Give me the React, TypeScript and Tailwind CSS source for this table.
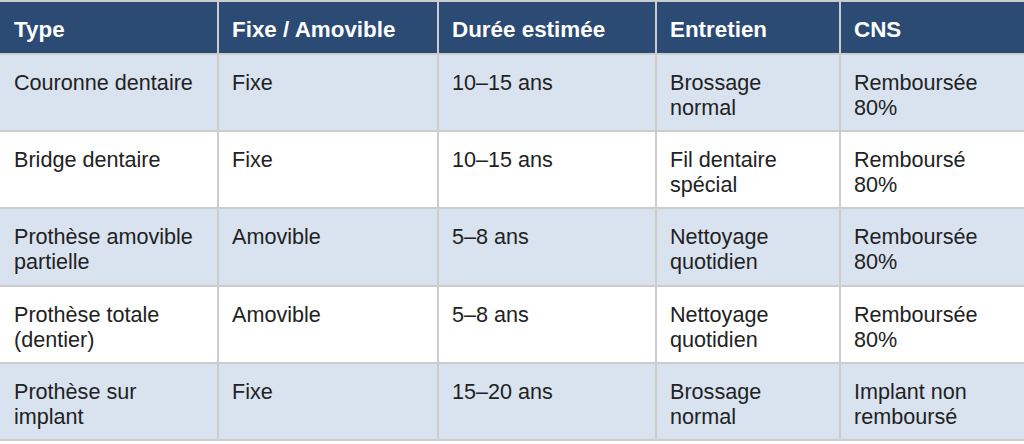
const HEADERS = ['Type', 'Fixe / Amovible', 'Durée estimée', 'Entretien', 'CNS']

const ROWS: string[][][] = [
  [['Couronne dentaire'], ['Fixe'], ['10–15 ans'], ['Brossage', 'normal'], ['Remboursée', '80%']],
  [['Bridge dentaire'], ['Fixe'], ['10–15 ans'], ['Fil dentaire', 'spécial'], ['Remboursé', '80%']],
  [['Prothèse amovible', 'partielle'], ['Amovible'], ['5–8 ans'], ['Nettoyage', 'quotidien'], ['Remboursée', '80%']],
  [['Prothèse totale', '(dentier)'], ['Amovible'], ['5–8 ans'], ['Nettoyage', 'quotidien'], ['Remboursée', '80%']],
  [['Prothèse sur', 'implant'], ['Fixe'], ['15–20 ans'], ['Brossage', 'normal'], ['Implant non', 'remboursé']],
]

const grid = 'grid grid-cols-[219px_220px_218px_184px_1fr]'

export default function App() {
  return (
    <div
      className="w-[1024px] h-[444px] overflow-hidden bg-white text-[21.6px] leading-[25px] text-[#222222]"
      style={{ fontFamily: '"Liberation Sans", Arial, Helvetica, sans-serif' }}
    >
      <div className="border-t-2 border-[#cccccc]">
        <div className={`${grid} h-[53px] bg-[#2c4b74] border-b-2 border-[#cccccc]`}>
          {HEADERS.map((h, i) => (
            <div
              key={h}
              className={`pt-[15px] text-[22.4px] font-bold text-white ${i === 0 ? 'pl-[14px]' : 'pl-[13px]'} ${i < 4 ? 'border-r-2 border-[#cccccc]' : ''}`}
            >
              {h}
            </div>
          ))}
        </div>

        {ROWS.map((row, r) => (
          <div
            key={r}
            className={`${grid} h-[77.2px] border-b-2 border-[#cccccc] ${r % 2 === 0 ? 'bg-[#d9e3f0]' : 'bg-white'}`}
          >
            {row.map((lines, i) => (
              <div
                key={i}
                className={`pt-[15px] ${i === 0 ? 'pl-[14px]' : 'pl-[13px]'} ${i < 4 ? 'border-r-2 border-[#cccccc]' : ''}`}
              >
                {lines.map((l) => (
                  <div key={l}>{l}</div>
                ))}
              </div>
            ))}
          </div>
        ))}
      </div>
    </div>
  )
}
